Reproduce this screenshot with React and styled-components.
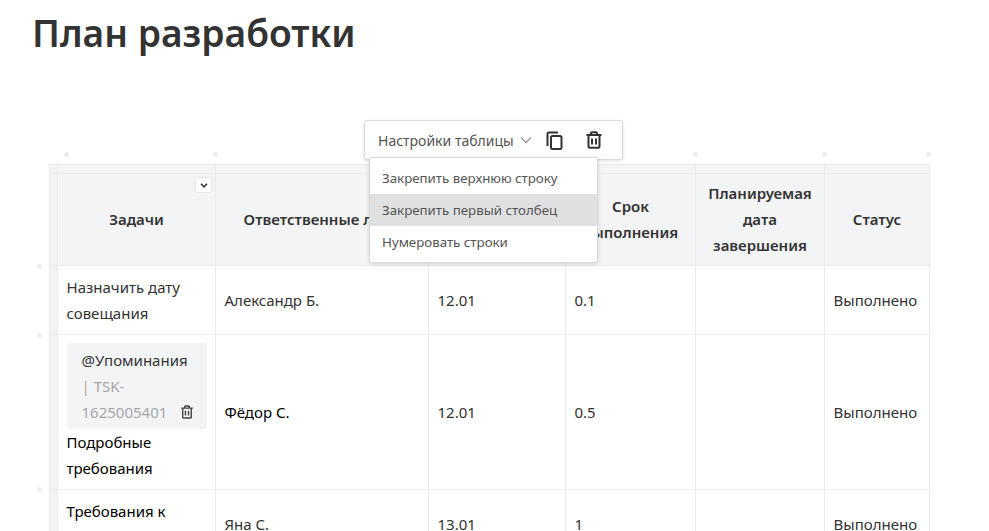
import React from "react";
import styled, { createGlobalStyle } from "styled-components";

const Global = createGlobalStyle`
  html, body { margin: 0; padding: 0; background: #fff; height: 100%; overflow: hidden; }
  body { font-family: "Noto Sans", "Liberation Sans", sans-serif; color: #37352f; }
`;

const Page = styled.div`
  width: 989px;
  height: 531px;
  overflow: hidden;
  padding: 8px 0 0 32px;
  box-sizing: border-box;
`;
const Title = styled.h1`
  margin: 0;
  font-size: 37.2px;
  line-height: 50px;
  font-weight: 600;
  color: #333;
`;
const Stage = styled.div`
  position: relative;
  margin: 106px 0 0 17px;
  width: 881px;
`;
const Table = styled.table`
  border-collapse: collapse;
  table-layout: fixed;
  width: 881px;
  font-size: 15px;
  line-height: 26px;
  color: #24292f;
`;
const Bar = styled.td`
  height: 8px;
  padding: 0;
  background: #f3f4f6;
  border: 1px solid #e9ebee;
`;
const Th = styled.th`
  position: relative;
  background: #f3f4f6;
  border: 1px solid #e9ebee;
  height: 92px;
  padding: 0 8px 2px;
  box-sizing: border-box;
  font-size: 15px;
  font-weight: 600;
  text-align: center;
  color: #333;
`;
const Td = styled.td`
  border: 1px solid #e9ebee;
  padding: 8px 8px 8px 8.5px;
  vertical-align: middle;
  box-sizing: border-box;
  color: ${(p) => (p.$dark ? "#000" : "#333")};
`;
const Side = styled.td`
  background: #f3f4f6;
  border: 1px solid #e9ebee;
  padding: 0;
`;
const HeadToggle = styled.span`
  position: absolute;
  top: 4px;
  right: 4px;
  width: 15px;
  height: 14px;
  background: #fff;
  border-radius: 2px;
  box-shadow: 0 0 2px rgba(0,0,0,.2);
  display: flex;
  align-items: center;
  justify-content: center;
`;
const Mention = styled.div`
  background: #f3f4f6;
  border-radius: 4px;
  padding: 5px 15px 0;
  height: 86px;
  box-sizing: border-box;
  position: relative;
  color: #333;
  margin-top: -1px;
`;
const MentionName = styled.div`
  white-space: nowrap;
  line-height: 25px;
`;
const Pipe = styled.span`
  color: #b5a998;
`;
const Muted = styled.span`
  color: #a5a7aa;
`;
const MentionTrash = styled.span`
  position: absolute;
  right: 13px;
  bottom: 10px;
  display: flex;
`;
const Dot = styled.i`
  position: absolute;
  width: 5px;
  height: 5px;
  border-radius: 50%;
  background: #eeeff1;
  left: ${(p) => p.$x}px;
  top: ${(p) => p.$y}px;
`;
const Toolbar = styled.div`
  position: absolute;
  left: 315px;
  top: -44px;
  width: 259px;
  height: 40px;
  box-sizing: border-box;
  background: #fff;
  border: 1px solid #d6d8db;
  border-radius: 3px;
  box-shadow: 0 1px 3px rgba(0,0,0,.12);
  display: flex;
  align-items: center;
  padding-left: 13px;
  font-size: 14px;
  color: #555;
`;
const ToolLabel = styled.span`
  margin-right: 6px;
`;
const ToolIcon = styled.span`
  display: flex;
  margin-left: ${(p) => p.$gap}px;
`;
const Menu = styled.div`
  position: absolute;
  left: 320px;
  top: -7px;
  width: 229px;
  height: 106px;
  box-sizing: border-box;
  padding: 4px 0;
  background: #fff;
  border: 1px solid #d6d8db;
  border-radius: 3px;
  box-shadow: 0 1px 4px rgba(0,0,0,.14);
`;
const MenuItem = styled.div`
  height: 32px;
  line-height: 32px;
  padding-left: 12px;
  font-size: 13.3px;
  color: #555;
  background: ${(p) => (p.$active ? "#dfe0e2" : "transparent")};
`;

const Chevron = () => (
  <svg width="12" height="8" viewBox="0 0 12 8" fill="none" stroke="#9a9a9a" strokeWidth="1.4"><path d="M1 1.5l5 5 5-5" /></svg>
);
const SmallChevron = () => (
  <svg width="8" height="5" viewBox="0 0 8 5" fill="none" stroke="#333" strokeWidth="1.6"><path d="M1 .8l3 3 3-3" /></svg>
);
const Copy = () => (
  <svg width="17" height="19" viewBox="0 0 17 19" fill="none" stroke="#333" strokeWidth="2"><path d="M12 1.5H2.8A1.3 1.3 0 0 0 1.5 2.8V15" /><rect x="5" y="5" width="10.5" height="13" rx="1.5" /></svg>
);
const Trash = ({ s = 18, c = "#333", w = 2 }) => (
  <svg width={s} height={s} viewBox="0 0 18 18" fill="none" stroke={c} strokeWidth={w}><path d="M1.5 4h15M6 4V2.2c0-.6.4-1 1-1h4c.6 0 1 .4 1 1V4M3.5 4v11.3c0 .8.6 1.5 1.5 1.5h8c.8 0 1.5-.7 1.5-1.5V4M7 7.5v6M11 7.5v6" /></svg>
);

export default function App() {
  return (
    <Page>
      <Global />
      <Title>План разработки</Title>
      <Stage>
        <Table>
          <colgroup>
            <col style={{ width: 8 }} />
            <col style={{ width: 158 }} />
            <col style={{ width: 213 }} />
            <col style={{ width: 137 }} />
            <col style={{ width: 130 }} />
            <col style={{ width: 129 }} />
            <col style={{ width: 105 }} />
          </colgroup>
          <tbody>
            <tr><Bar /><Bar /><Bar /><Bar /><Bar /><Bar /><Bar /></tr>
            <tr>
              <Side />
              <Th>Задачи<HeadToggle><SmallChevron /></HeadToggle></Th>
              <Th>Ответственные лица</Th>
              <Th>Начало</Th>
              <Th>Срок<br />выполнения</Th>
              <Th>Планируемая дата завершения</Th>
              <Th>Статус</Th>
            </tr>
            <tr>
              <Side />
              <Td style={{ height: 69 }}>Назначить дату совещания</Td>
              <Td>Александр Б.</Td>
              <Td>12.01</Td>
              <Td>0.1</Td>
              <Td />
              <Td>Выполнено</Td>
            </tr>
            <tr>
              <Side />
              <Td $dark style={{ height: 155 }}>
                <Mention>
                  <MentionName>@Упоминания</MentionName>
                  <Pipe>|</Pipe> <Muted>TSK-1625005401</Muted>
                  <MentionTrash><Trash s={14} c="#444" w={1.8} /></MentionTrash>
                </Mention>
                Подробные требования
              </Td>
              <Td $dark>Фёдор С.</Td>
              <Td>12.01</Td>
              <Td>0.5</Td>
              <Td />
              <Td>Выполнено</Td>
            </tr>
            <tr>
              <Side />
              <Td $dark>Требования к функциям</Td>
              <Td>Яна С.</Td>
              <Td>13.01</Td>
              <Td>1</Td>
              <Td />
              <Td>Выполнено</Td>
            </tr>
          </tbody>
        </Table>
        {[15, 164, 644, 773, 877].map((x) => <Dot key={x} $x={x} $y={-12} />)}
        {[100, 169, 323].map((y) => <Dot key={y} $x={-12} $y={y} />)}
        <Toolbar>
          <ToolLabel>Настройки таблицы</ToolLabel>
          <Chevron />
          <ToolIcon $gap={14}><Copy /></ToolIcon>
          <ToolIcon $gap={22}><Trash /></ToolIcon>
        </Toolbar>
        <Menu>
          <MenuItem>Закрепить верхнюю строку</MenuItem>
          <MenuItem $active>Закрепить первый столбец</MenuItem>
          <MenuItem>Нумеровать строки</MenuItem>
        </Menu>
      </Stage>
    </Page>
  );
}
